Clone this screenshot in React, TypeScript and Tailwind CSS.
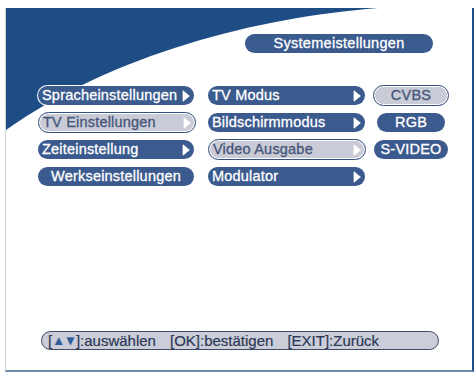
import type { ReactNode } from 'react'

const font = { fontFamily: '"Liberation Sans", Arial, sans-serif' }

function Arrow() {
  return (
    <svg width="8" height="12" viewBox="0 0 8 12" className="shrink-0">
      <path d="M1 0.8 L7.4 6 L1 11.2 Z" fill="#ffffff" stroke="#ffffff" strokeWidth="0.8" strokeLinejoin="round" />
    </svg>
  )
}

function Pill({
  children,
  selected,
  arrow,
  center,
  width,
}: {
  children: ReactNode
  selected?: boolean
  arrow?: boolean
  center?: boolean
  width: string
}) {
  const base = `${width} flex items-center rounded-full text-[14.5px] leading-none tracking-[0.2px] [-webkit-text-stroke:0.3px_currentColor]`
  const look = selected
    ? 'h-[21px] -my-px bg-[#c9ccd6] border border-[#33507e] shadow-[inset_0_0_0_1px_#ffffff] text-[#46557a]'
    : 'h-[19px] bg-[#3b5a8e] ring-1 ring-white text-white'
  return (
    <div className={`${base} ${look} ${center ? 'justify-center' : 'justify-between pl-[4px] pr-[4px]'}`}>
      <span>{children}</span>
      {arrow && <Arrow />}
    </div>
  )
}

export default function App() {
  return (
    <div className="w-[476px] h-[373px] bg-white pt-[8px] pl-[5px]" style={font}>
      <div className="relative w-[469px] h-[364px] flex flex-col border-l border-l-[#cfd2d8] border-r-2 border-r-[#1f4f86] border-b-2 border-b-[#7189ab] overflow-hidden">
        <svg className="absolute left-0 top-0" width="469" height="140" viewBox="0 0 469 140">
          <path d="M0 0 H372 C250 10 110 45 0 122 Z" fill="#1e4d86" />
        </svg>

        <div className="relative flex flex-col h-full">
          <div className="ml-[239px] mt-[26px] w-[188px] h-[19px] rounded-full bg-[#3b5a8e] text-white text-[14.5px] leading-none tracking-[0.3px] [-webkit-text-stroke:0.3px_currentColor] flex items-center justify-center">
            Systemeistellungen
          </div>

          <div className="mt-[33px] ml-[32px] flex">
            <div className="flex flex-col gap-[8px]">
              <Pill width="w-[156px]" arrow>Spracheinstellungen</Pill>
              <Pill width="w-[158px]" arrow selected>TV Einstellungen</Pill>
              <Pill width="w-[156px]" arrow>Zeiteinstellung</Pill>
              <Pill width="w-[156px]" center>Werkseinstellungen</Pill>
            </div>
            <div className="ml-[12px] flex flex-col gap-[8px]">
              <Pill width="w-[157px]" arrow>TV Modus</Pill>
              <Pill width="w-[157px]" arrow>Bildschirmmodus</Pill>
              <Pill width="w-[158px]" arrow selected>Video Ausgabe</Pill>
              <Pill width="w-[157px]" arrow>Modulator</Pill>
            </div>
            <div className="ml-[7px] w-[76px] flex flex-col gap-[8px] items-center">
              <Pill width="w-[76px]" center selected>CVBS</Pill>
              <Pill width="w-[68px]" center>RGB</Pill>
              <Pill width="w-[74px]" center>S-VIDEO</Pill>
            </div>
          </div>

          <div className="mt-auto mb-[20px] ml-[35px] w-[398px] h-[19px] rounded-full bg-[#cbced8] border-[1.5px] border-[#3d4a68] flex items-center pl-[6px] text-[15px] leading-none text-[#2b3856] [-webkit-text-stroke:0.2px_currentColor]">
            <span>[</span>
            <span className="text-[#2d5b9c] text-[13px] tracking-[-1px]">▲▼</span>
            <span>]:auswählen</span>
            <span className="ml-[14px]">[OK]:bestätigen</span>
            <span className="ml-[14px]">[EXIT]:Zurück</span>
          </div>
        </div>
      </div>
    </div>
  )
}
